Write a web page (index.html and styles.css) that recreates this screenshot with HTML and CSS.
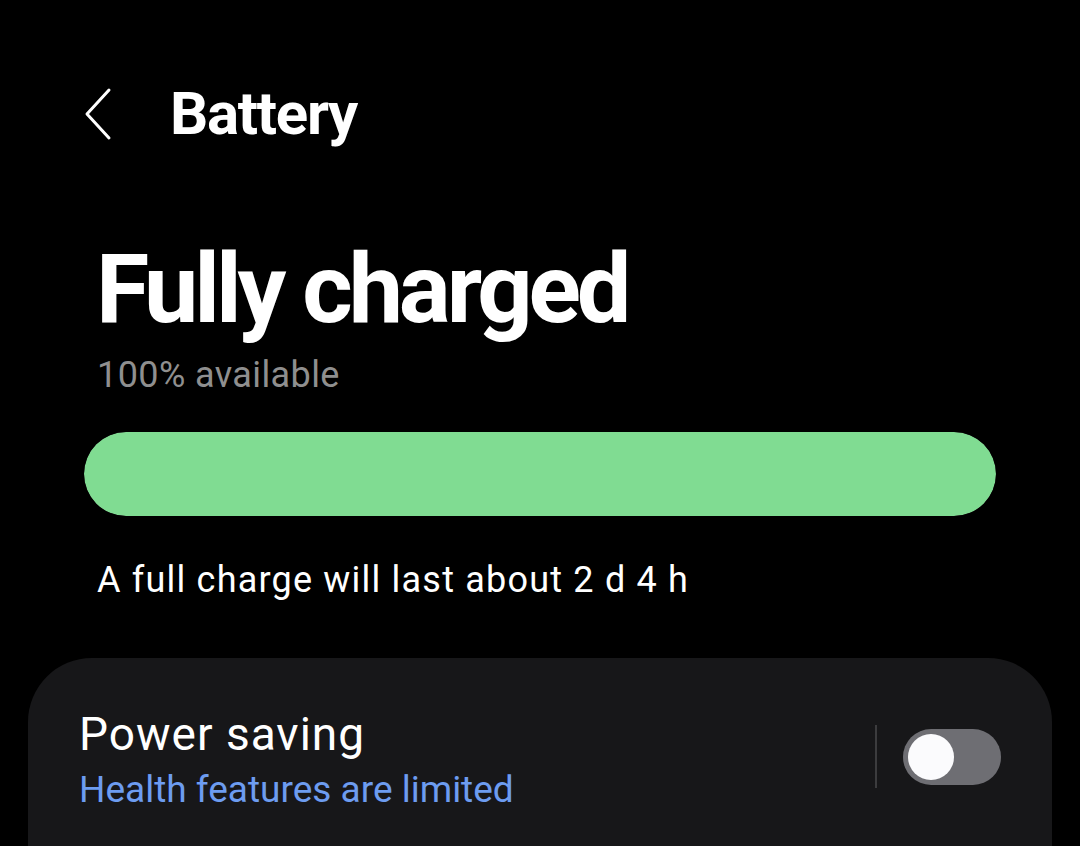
FILE: index.html
```html
<!DOCTYPE html>
<html lang="en">
<head>
<meta charset="utf-8">
<title>Battery</title>
<link rel="stylesheet" href="styles.css">
</head>
<body>
<div class="screen">
  <header class="appbar">
    <svg class="back" width="30" height="54" viewBox="0 0 30 54" aria-hidden="true">
      <polyline points="25,3 3,27 25,51" fill="none" stroke="#ffffff" stroke-width="3" stroke-linecap="round" stroke-linejoin="round"/>
    </svg>
    <h1 class="appbar-title">Battery</h1>
  </header>

  <section class="status">
    <h2 class="status-title">Fully charged</h2>
    <p class="status-sub">100% available</p>
  </section>

  <div class="meter"><div class="meter-fill" style="width:100%"></div></div>

  <p class="estimate">A full charge will last about 2 d 4 h</p>

  <section class="card">
    <div class="row">
      <div class="row-text">
        <div class="row-title">Power saving</div>
        <div class="row-sub">Health features are limited</div>
      </div>
      <div class="row-divider"></div>
      <div class="switch"><div class="switch-knob"></div></div>
    </div>
  </section>
</div>
</body>
</html>
```
FILE: styles.css
```css
html, body {
  margin: 0;
  padding: 0;
  background: #000000;
}
body {
  font-family: Roboto, "Noto Sans", "Liberation Sans", sans-serif;
  color: #ffffff;
  width: 1080px;
  height: 846px;
  overflow: hidden;
}
.screen {
  display: flex;
  flex-direction: column;
}
.appbar {
  display: flex;
  align-items: center;
  height: 60px;
  margin-top: 84px;
  padding-left: 84px;
}
.back {
  display: block;
  flex: none;
}
.appbar-title {
  margin: 0 0 0 56px;
  font-size: 60px;
  line-height: 60px;
  font-weight: 700;
  letter-spacing: -1.3px;
}
.status {
  padding-left: 96px;
  margin-top: 95px;
}
.status-title {
  margin: 0;
  font-size: 97px;
  line-height: 100px;
  font-weight: 700;
  letter-spacing: -4.1px;
}
.status-sub {
  margin: 16px 0 0 0;
  padding-left: 1px;
  font-size: 36px;
  line-height: 40px;
  letter-spacing: 0.4px;
  color: #8f8f8f;
}
.meter {
  margin: 37px 84px 0 84px;
  height: 84px;
  border-radius: 42px;
  background: #2a2a2a;
  overflow: hidden;
}
.meter-fill {
  height: 100%;
  background: #80dc92;
  border-radius: 42px;
}
.estimate {
  margin: 44px 0 0 0;
  padding-left: 97px;
  font-size: 36px;
  line-height: 40px;
  letter-spacing: 1.2px;
  color: #ffffff;
}
.card {
  margin: 58px 28px 0 28px;
  background: #171719;
  border-radius: 64px 64px 0 0;
  height: 188px;
  box-sizing: border-box;
  padding: 50px 51px 0 51px;
}
.row {
  display: flex;
  align-items: flex-start;
}
.row-text {
  flex: 1;
}
.row-title {
  font-size: 46px;
  line-height: 52px;
  letter-spacing: 1px;
}
.row-sub {
  margin-top: 9px;
  font-size: 37px;
  line-height: 42px;
  color: #6d9cf0;
}
.row-divider {
  width: 2px;
  height: 63px;
  margin-top: 17px;
  background: #3c3c3e;
  margin-right: 26px;
}
.switch {
  width: 98px;
  height: 56px;
  margin-top: 21px;
  border-radius: 28px;
  background: #6e6e73;
  display: flex;
  align-items: center;
  padding-left: 5px;
  box-sizing: border-box;
}
.switch-knob {
  width: 46px;
  height: 46px;
  border-radius: 50%;
  background: #fbfbfd;
}
```
